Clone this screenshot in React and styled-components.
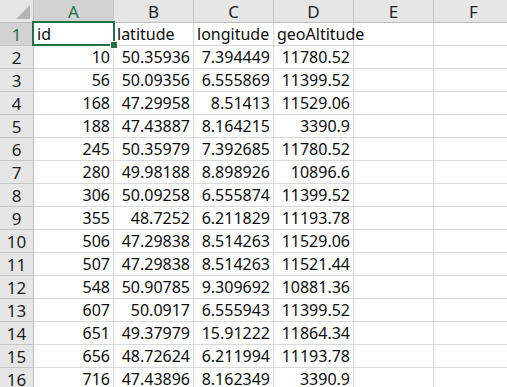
import React from 'react';
import styled, { createGlobalStyle } from 'styled-components';

const GlobalStyle = createGlobalStyle`
  html, body {
    margin: 0;
    padding: 0;
    background: #fff;
    overflow: hidden;
  }
  body {
    font-family: "Noto Sans", "Liberation Sans", sans-serif;
  }
`;

const columns = ['A', 'B', 'C', 'D', 'E', 'F'];

const rows = [
  ['id', 'latitude', 'longitude', 'geoAltitude'],
  ['10', '50.35936', '7.394449', '11780.52'],
  ['56', '50.09356', '6.555869', '11399.52'],
  ['168', '47.29958', '8.51413', '11529.06'],
  ['188', '47.43887', '8.164215', '3390.9'],
  ['245', '50.35979', '7.392685', '11780.52'],
  ['280', '49.98188', '8.898926', '10896.6'],
  ['306', '50.09258', '6.555874', '11399.52'],
  ['355', '48.7252', '6.211829', '11193.78'],
  ['506', '47.29838', '8.514263', '11529.06'],
  ['507', '47.29838', '8.514263', '11521.44'],
  ['548', '50.90785', '9.309692', '10881.36'],
  ['607', '50.0917', '6.555943', '11399.52'],
  ['651', '49.37979', '15.91222', '11864.34'],
  ['656', '48.72624', '6.211994', '11193.78'],
  ['716', '47.43896', '8.162349', '3390.9'],
];

const Sheet = styled.div`
  position: relative;
  display: grid;
  grid-template-columns: 34px repeat(6, 80px);
  grid-template-rows: 23px;
  grid-auto-rows: 23px;
  width: 520px;
  color: #111;
  font-size: 16px;
`;

const Corner = styled.div`
  position: relative;
  background: #e6e6e6;
  border-right: 1px solid #bdbdbd;
  border-bottom: 1px solid #bdbdbd;

  &::after {
    content: '';
    position: absolute;
    right: 3px;
    bottom: 3px;
    width: 0;
    height: 0;
    border-left: 14px solid transparent;
    border-bottom: 14px solid #b4b4b4;
  }
`;

const ColHead = styled.div`
  display: flex;
  align-items: center;
  justify-content: center;
  background: ${({ $active }) => ($active ? '#d2d2d2' : '#e6e6e6')};
  color: ${({ $active }) => ($active ? '#217346' : '#1f1f1f')};
  border-right: 1px solid #c4c4c4;
  border-bottom: 1px solid #bdbdbd;
  font-size: 17px;
  line-height: 1;
  padding-top: 1px;
`;

const RowHead = styled.div`
  display: flex;
  align-items: center;
  justify-content: center;
  background: ${({ $active }) => ($active ? '#d2d2d2' : '#e6e6e6')};
  color: ${({ $active }) => ($active ? '#217346' : '#1f1f1f')};
  border-right: 1px solid #bdbdbd;
  border-bottom: 1px solid #c4c4c4;
  font-size: 17px;
  line-height: 1;
  padding-top: 1px;
`;

const Cell = styled.div`
  display: flex;
  align-items: flex-end;
  justify-content: ${({ $num }) => ($num ? 'flex-end' : 'flex-start')};
  padding: 0 3px 1px 3px;
  border-right: 1px solid #d9d9d9;
  border-bottom: 1px solid #d9d9d9;
  white-space: nowrap;
  overflow: visible;
  line-height: 20px;
  font-size: 16px;
  color: #0d0d0d;
`;

const Selection = styled.div`
  position: absolute;
  left: 32px;
  top: 21px;
  width: 79px;
  height: 21px;
  border: 2px solid #217346;
  pointer-events: none;

  &::after {
    content: '';
    position: absolute;
    right: -5px;
    bottom: -5px;
    width: 6px;
    height: 6px;
    background: #217346;
    border: 1px solid #fff;
  }
`;

const isNum = (v) => /^[0-9.]+$/.test(v);

export default function App() {
  return (
    <>
      <GlobalStyle />
      <Sheet>
        <Corner />
        {columns.map((c, i) => (
          <ColHead key={c} $active={i === 0}>{c}</ColHead>
        ))}
        {rows.map((r, ri) => (
          <React.Fragment key={ri}>
            <RowHead $active={ri === 0}>{ri + 1}</RowHead>
            {columns.map((c, ci) => {
              const v = r[ci] || '';
              return (
                <Cell key={c} $num={isNum(v)}>{v}</Cell>
              );
            })}
          </React.Fragment>
        ))}
        <Selection />
      </Sheet>
    </>
  );
}
